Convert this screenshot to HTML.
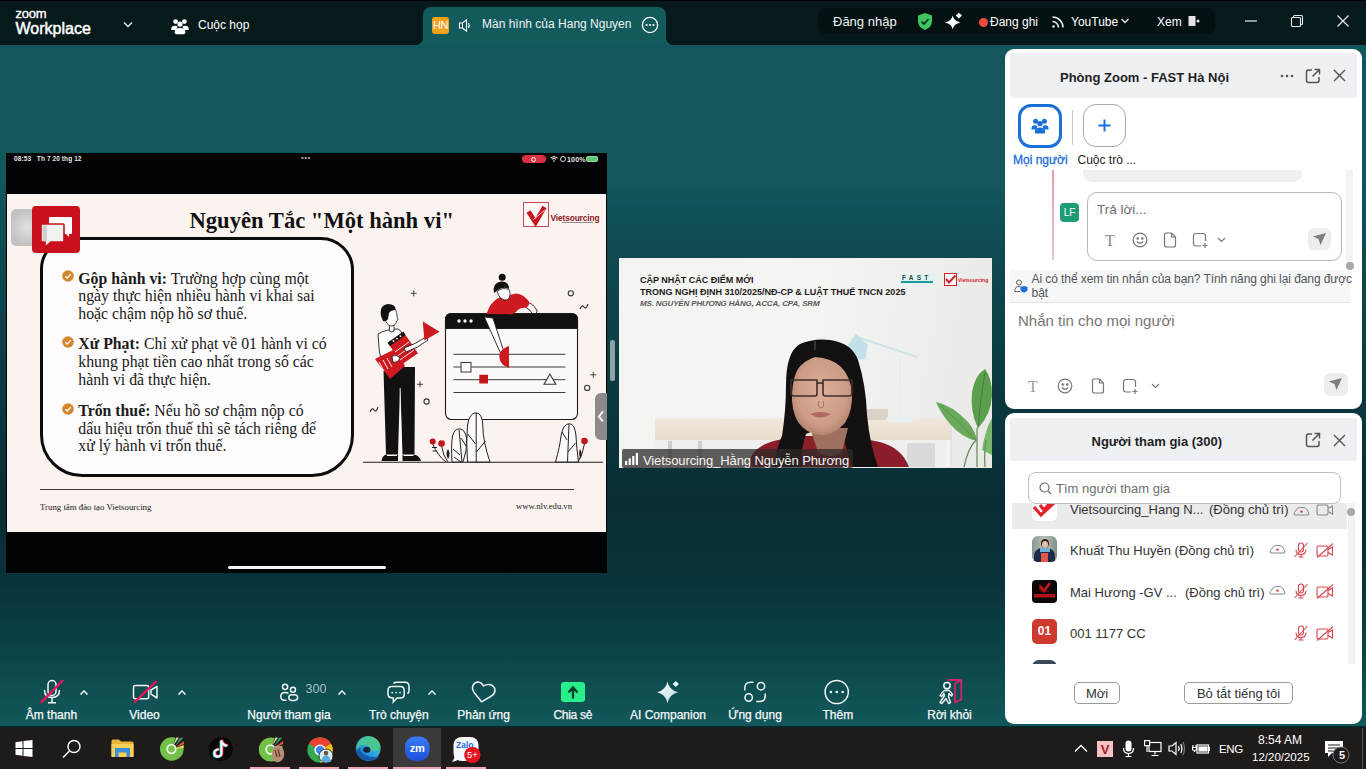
<!DOCTYPE html>
<html><head><meta charset="utf-8">
<style>
*{margin:0;padding:0;box-sizing:border-box}
html,body{width:1366px;height:769px;overflow:hidden;font-family:"Liberation Sans",sans-serif}
body{position:relative;background:linear-gradient(to bottom,#12575b 0px,#12575b 185px,#105259 205px,#0f4950 258px,#0b3a41 380px,#082d34 500px,#09333a 585px,#0c4649 660px,#12575a 722px,#12575a 728px)}
.a{position:absolute}
.t{position:absolute;line-height:1;white-space:nowrap}
#top{left:0;top:0;width:1366px;height:45px;background:#061a1c;border-top:1px solid #000}
#tab{left:423px;top:7px;width:243px;height:38px;background:#135a5d;border-radius:8px 8px 0 0}
#pill{left:818px;top:8px;width:397px;height:26px;background:#031113;border-radius:8px}
.w{color:#fff}
</style></head><body>
<!-- TOP BAR -->
<div id="top" class="a">
  <div class="t w" style="left:15.5px;top:5.5px;font-size:13px;letter-spacing:-0.2px;-webkit-text-stroke:0.35px #fff">zoom</div>
  <div class="t w" style="left:15.5px;top:19.5px;font-size:16px;-webkit-text-stroke:0.45px #fff">Workplace</div>
  <svg class="a" style="left:122px;top:19px" width="12" height="9" viewBox="0 0 12 9"><path d="M2 2.5 L6 6.5 L10 2.5" stroke="#dfe6e6" stroke-width="1.4" fill="none"/></svg>
  <svg class="a" style="left:171px;top:16.5px" width="18" height="17" viewBox="0 0 18 16" fill="#fff"><circle cx="4.6" cy="3.1" r="2.4"/><circle cx="13.4" cy="3.1" r="2.4"/><circle cx="9" cy="5.6" r="2.6"/><path d="M0.3 10.5 Q0.3 7.2 4 7.2 Q6 7.2 6.6 8.3 L5 11.6 H0.3Z"/><path d="M17.7 10.5 Q17.7 7.2 14 7.2 Q12 7.2 11.4 8.3 L13 11.6 H17.7Z"/><path d="M3.6 14 Q3.6 9.4 9 9.4 Q14.4 9.4 14.4 14 Q14.4 15.8 12.5 15.8 H5.5 Q3.6 15.8 3.6 14Z"/></svg>
  <div class="t w" style="left:198px;top:18px;font-size:12px">Cuộc họp</div>
</div>
<div id="tab" class="a">
  <div class="a" style="left:-8px;top:30px;width:8px;height:8px;background:radial-gradient(circle at 0 0,#061a1c 8px,#135a5d 8.5px)"></div>
  <div class="a" style="right:-8px;top:30px;width:8px;height:8px;background:radial-gradient(circle at 100% 0,#061a1c 8px,#135a5d 8.5px)"></div>
  <div class="a" style="left:9px;top:10px;width:17px;height:17px;background:#f0a21f;border-radius:3px"></div>
  <div class="t" style="left:9px;top:13px;width:17px;text-align:center;font-size:11px;color:#fff;letter-spacing:-0.5px">HN</div>
  <svg class="a" style="left:35px;top:11px" width="15" height="15" viewBox="0 0 15 15"><path d="M1.5 5 H4.5 L8.5 1.8 V13.2 L4.5 10 H1.5Z" stroke="#fff" stroke-width="1.1" fill="none"/><path d="M4.5 5 V10" stroke="#fff" stroke-width="1"/><path d="M10.5 5 Q12 7.5 10.5 10" stroke="#fff" stroke-width="1.1" fill="none"/></svg>
  <div class="t w" style="left:59px;top:11px;font-size:12px;color:#eef4f4">Màn hình của Hang Nguyen</div>
  <svg class="a" style="left:218px;top:9px" width="18" height="18" viewBox="0 0 18 18"><circle cx="9" cy="9" r="7.6" stroke="#fff" stroke-width="1.3" fill="none"/><circle cx="5.6" cy="9" r="1.1" fill="#fff"/><circle cx="9" cy="9" r="1.1" fill="#fff"/><circle cx="12.4" cy="9" r="1.1" fill="#fff"/></svg>
</div>
<div id="pill" class="a">
  <div class="t w" style="left:15px;top:7px;font-size:13px;color:#f2f2f2">Đăng nhập</div>
  <svg class="a" style="left:98px;top:4px" width="18" height="19" viewBox="0 0 18 19"><path d="M9 1 L16 3.6 V9 C16 13.5 12.8 16.5 9 18 C5.2 16.5 2 13.5 2 9 V3.6Z" fill="#3ec55f"/><path d="M5.5 9.5 L8 12 L12.5 7" stroke="#0e2a17" stroke-width="1.7" fill="none"/></svg>
  <svg class="a" style="left:125px;top:3px" width="20" height="20" viewBox="943 11 20 20" fill="#fff"><path d="M952.7 15.6 Q953.8 21.2 960.4 22.5 Q953.8 23.8 952.7 29.3 Q951.6 23.8 945 22.5 Q951.6 21.2 952.7 15.6Z"/><path d="M958.8 12.8 L962 15.6 L958.8 18.4 L955.8 15.6Z"/></svg>
  <div class="a" style="left:161px;top:10px;width:9px;height:9px;border-radius:50%;background:#ee4b3e"></div>
  <div class="t w" style="left:172px;top:8px;font-size:12px">Đang ghi</div>
  <svg class="a" style="left:233px;top:6px" width="15" height="15" viewBox="0 0 15 15" fill="none" stroke="#e8e8e8" stroke-width="1.6"><circle cx="2.5" cy="12.5" r="1.3" fill="#e8e8e8" stroke="none"/><path d="M1.5 7.5 A6 6 0 0 1 7.5 13.5"/><path d="M1.5 3 A10.5 10.5 0 0 1 12 13.5"/></svg>
  <div class="t w" style="left:253px;top:8px;font-size:12px">YouTube</div>
  <svg class="a" style="left:302px;top:9px" width="10" height="8" viewBox="0 0 10 8"><path d="M1.5 2 L5 5.5 L8.5 2" stroke="#e8e8e8" stroke-width="1.3" fill="none"/></svg>
  <div class="t w" style="left:339px;top:8px;font-size:12px">Xem</div>
  <svg class="a" style="left:369px;top:7px" width="14" height="13" viewBox="0 0 14 13"><rect x="1.5" y="1" width="7" height="10" fill="#e6e6e6"/><circle cx="11" cy="6" r="1.5" fill="#e6e6e6"/></svg>
</div>
<svg class="a" style="left:1244px;top:14px" width="14" height="14" viewBox="0 0 14 14"><path d="M1 7 H13" stroke="#e8e8e8" stroke-width="1.2"/></svg>
<svg class="a" style="left:1290px;top:14px" width="14" height="14" viewBox="0 0 14 14" fill="none" stroke="#e8e8e8" stroke-width="1.1"><rect x="1.5" y="3.5" width="9" height="9" rx="1"/><path d="M3.5 3.5 V2.5 Q3.5 1.5 4.5 1.5 H11.5 Q12.5 1.5 12.5 2.5 V9.5 Q12.5 10.5 11.5 10.5 H10.5"/></svg>
<svg class="a" style="left:1336px;top:14px" width="14" height="14" viewBox="0 0 14 14"><path d="M1.5 1.5 L12.5 12.5 M12.5 1.5 L1.5 12.5" stroke="#e8e8e8" stroke-width="1.2"/></svg>


<!-- SHARE -->
<div class="a" style="left:6px;top:153px;width:601px;height:420px;background:#020103;overflow:hidden">
  <div class="t" style="left:8px;top:3px;font-size:6.5px;font-weight:bold;color:#e8e8e8;letter-spacing:0.1px">08:53&nbsp;&nbsp;&nbsp;Th 7 20 thg 12</div>
  <div class="t" style="left:295px;top:1px;font-size:8px;color:#aaa;letter-spacing:0.5px">•••</div>
  <div class="a" style="left:516px;top:2px;width:24px;height:8px;border-radius:4px;background:#d8323e"></div>
  <div class="a" style="left:525px;top:3.5px;width:5px;height:5px;border-radius:50%;border:1px solid #fff"></div>
  <svg class="a" style="left:544px;top:3px" width="8" height="6" viewBox="0 0 8 6"><path d="M0.5 2 Q4 -1 7.5 2 M1.8 3.3 Q4 1.5 6.2 3.3" stroke="#fff" stroke-width="1" fill="none"/><circle cx="4" cy="5" r="0.8" fill="#fff"/></svg>
  <div class="a" style="left:554px;top:3px;width:6px;height:6px;border-radius:50%;border:1px solid #ddd"></div>
  <div class="t" style="left:561px;top:2.5px;font-size:7px;font-weight:bold;color:#e8e8e8;letter-spacing:0.2px">100%</div>
  <div class="a" style="left:580px;top:3px;width:12px;height:6px;border-radius:1.5px;background:#5cc873;border:0.5px solid #9ad9a5"></div>
  <div class="a" style="left:1px;top:41px;width:599px;height:338px;background:#fbf3f0;overflow:hidden">
    <div class="t" style="left:182.5px;top:15.5px;font-family:'Liberation Serif',serif;font-weight:bold;font-size:22.6px;color:#111">Nguyên Tắc "Một hành vi"</div>
    <div class="a" style="left:516px;top:8px;width:25.5px;height:25px;border:1.4px solid #c44a55;background:#fdf7f6"></div>
    <svg class="a" style="left:516px;top:8px" width="26" height="25" viewBox="523 202 26 25"><path d="M528.5 211.5 L535.5 222.5 L544.5 207" stroke="#c8141e" stroke-width="4.6" fill="none" stroke-linejoin="miter"/><path d="M533.5 219.5 L544.8 210" stroke="#fdf7f6" stroke-width="0.9" fill="none"/></svg>
    <div class="t" style="left:543.5px;top:19.5px;font-size:8.3px;font-weight:bold;color:#8e1422;letter-spacing:-0.1px">Vietsourcing</div>
    <div class="a" style="left:555px;top:28px;width:31px;height:1.2px;background:#9a8a8a"></div>
    <div class="a" style="left:33px;top:42.5px;width:313.5px;height:240.5px;border:3px solid #0c0c0c;border-radius:32px 33px 42px 42px;background:#fefcfc"></div>
    <div class="a" style="left:4px;top:15px;width:27px;height:37px;border-radius:5px;background:radial-gradient(circle at 60% 50%,#e2e2e2,#c2c2c2 70%)"></div>
    <div class="a" style="left:25px;top:12px;width:48px;height:47px;border-radius:4px;background:#c8111c"></div>
    <svg class="a" style="left:25px;top:12px" width="48" height="47" viewBox="0 0 48 47">
      <path d="M17 12 Q17 11 18 11 H39 Q40 11 40 12 V27 Q40 28 39 28 H37 V31 L34 28 H27 V22 Q27 20 25 20 H17Z" fill="#fff"/>
      <path d="M9 19 Q9 18 10 18 H31 Q32 18 32 19 V35 Q32 36 31 36 H19 L13 41 V36 H10 Q9 36 9 35Z" fill="#f2f2f2" stroke="#c8111c" stroke-width="1.6"/>
      <path d="M10.5 19.5 H15 V35 H10.5Z" fill="#cfcfcf"/>
    </svg>
    <div class="t" style="left:71.3px;top:76.7px;font-family:'Liberation Serif',serif;font-size:15.8px;color:#1a1a1a"><b>Gộp hành vi:</b> Trường hợp cùng một</div>
<div class="t" style="left:71.3px;top:94.3px;font-family:'Liberation Serif',serif;font-size:15.8px;color:#1a1a1a">ngày thực hiện nhiều hành vi khai sai</div>
<div class="t" style="left:71.3px;top:111.9px;font-family:'Liberation Serif',serif;font-size:15.8px;color:#1a1a1a">hoặc chậm nộp hồ sơ thuế.</div>
<div class="t" style="left:71.3px;top:142.4px;font-family:'Liberation Serif',serif;font-size:15.8px;color:#1a1a1a"><b>Xử Phạt:</b> Chỉ xử phạt về 01 hành vi có</div>
<div class="t" style="left:71.3px;top:160.0px;font-family:'Liberation Serif',serif;font-size:15.8px;color:#1a1a1a">khung phạt tiền cao nhất trong số các</div>
<div class="t" style="left:71.3px;top:177.6px;font-family:'Liberation Serif',serif;font-size:15.8px;color:#1a1a1a">hành vi đã thực hiện.</div>
<div class="t" style="left:71.3px;top:208.9px;font-family:'Liberation Serif',serif;font-size:15.8px;color:#1a1a1a"><b>Trốn thuế:</b> Nếu hồ sơ chậm nộp có</div>
<div class="t" style="left:71.3px;top:226.5px;font-family:'Liberation Serif',serif;font-size:15.8px;color:#1a1a1a">dấu hiệu trốn thuế thì sẽ tách riêng để</div>
<div class="t" style="left:71.3px;top:244.1px;font-family:'Liberation Serif',serif;font-size:15.8px;color:#1a1a1a">xử lý hành vi trốn thuế.</div>
<svg class="a" style="left:54.5px;top:76px" width="12" height="12" viewBox="0 0 12 12"><circle cx="6" cy="6" r="5.8" fill="#d3872c"/><path d="M3.3 6.2 L5.2 8 L8.8 4.3" stroke="#fff" stroke-width="1.3" fill="none"/></svg><svg class="a" style="left:54.5px;top:142.3px" width="12" height="12" viewBox="0 0 12 12"><circle cx="6" cy="6" r="5.8" fill="#d3872c"/><path d="M3.3 6.2 L5.2 8 L8.8 4.3" stroke="#fff" stroke-width="1.3" fill="none"/></svg><svg class="a" style="left:54.5px;top:209.3px" width="12" height="12" viewBox="0 0 12 12"><circle cx="6" cy="6" r="5.8" fill="#d3872c"/><path d="M3.3 6.2 L5.2 8 L8.8 4.3" stroke="#fff" stroke-width="1.3" fill="none"/></svg>
    <div class="a" style="left:33px;top:294.5px;width:534px;height:1.5px;background:#3a3a3a"></div>
    <div class="t" style="left:33px;top:308.5px;font-family:'Liberation Serif',serif;font-size:8.8px;color:#222">Trung tâm đào tạo Vietsourcing</div>
    <div class="t" style="left:509px;top:307.5px;font-family:'Liberation Serif',serif;font-size:8.6px;color:#222">www.nlv.edu.vn</div>
<svg class="a" style="left:0;top:0" width="599" height="338" viewBox="7 194 599 338">
<g fill="none" stroke="#1c1c1c" stroke-width="1.1">
<path d="M363 462.3 H603"/>
<rect x="445.5" y="313.5" width="132" height="106" rx="6" fill="#fdf9f8"/>
<path d="M445.5 328.5 V319.5 Q445.5 313.5 451.5 313.5 H571.5 Q577.5 313.5 577.5 319.5 V328.5Z" fill="#111"/>
<path d="M453.5 354.3 H565.5 M453.5 367 H565.5 M453.5 379.7 H565.5 M453.5 392.5 H565.5" stroke="#3a3a3a" stroke-width="1"/>
<rect x="461" y="362.5" width="10" height="9.5" fill="#fff" stroke="#444"/>
<path d="M544 384.3 L549.9 374 L555.8 384.3Z" fill="#fff" stroke="#333"/>
<!-- sparkles -->
<path d="M413.7 290.3 V296.3 M410.7 293.3 H416.7 M420 381.3 V387.3 M417 384.3 H423 M593.3 371.8 V377.8 M590.3 374.8 H596.3" stroke="#333" stroke-width="0.9"/>
<circle cx="570.8" cy="293.3" r="2.6" stroke="#333"/><circle cx="426.6" cy="401.5" r="2.6" stroke="#333"/><circle cx="587.2" cy="387.9" r="2.6" stroke="#333"/>
<path d="M580 309 Q582 304 584 307 Q586 310 588 304" stroke="#333"/><path d="M370 412 Q372 407 374 410 Q376 413 378 407" stroke="#333"/>
<!-- plants -->
<path d="M467.5 462 Q466 442 467.5 425 Q469.5 412.8 476 412.8 Q482.5 413 482.8 426 Q483 442 490 462Z M476.2 413 V462 M467.8 434 L475.5 444 M476.5 452 L485.5 441" stroke="#222" stroke-width="1" fill="#fdf9f8"/>
<path d="M452 462 Q451 445 452.5 436 Q454.5 428.8 459.5 428.8 Q465 429 466.5 438 Q467.5 450 463 462Z M459 429.5 L462 462 M453 449 L460 455 M454 457 L461 462 M461 438 L466 446" stroke="#222" stroke-width="1" fill="#fdf9f8"/>
<path d="M555.5 462 Q560 446 561 436 Q563 423.7 569.5 423.7 Q575 424 576 436 Q576.5 448 578.5 462Z M569 424 L567.5 462 M562 432 L567 440 M568 452 L575.5 443" stroke="#222" stroke-width="1" fill="#fdf9f8"/>
<path d="M432.7 444 Q438 456 446 462 M441.6 446 Q443 456 448 462 M584.5 443.5 Q583 454 578 462 M432 447.5 H437 M432.5 451 H437" stroke="#222" stroke-width="1" fill="none"/>
</g>
<g fill="#fff"><circle cx="459" cy="321" r="1.7"/><circle cx="465" cy="321" r="1.7"/><circle cx="471" cy="321" r="1.7"/></g>
<rect x="479.3" y="374.8" width="8.7" height="8.7" fill="#c4141c"/>
<g fill="#c4141c"><circle cx="432.7" cy="441.6" r="3"/><circle cx="441.6" cy="443.6" r="3.3"/><circle cx="584.5" cy="441" r="3.3"/></g>
<path d="M448 459 Q445 453 448 449 Q451 454 448 459Z M580.5 459 Q578 453 580 449 Q583 454 580.5 459Z" fill="#222"/>
<!-- woman -->
<path d="M486.5 314 Q490 302 499.3 297.5 L515.8 293.6 Q524 294 530 303 L526.5 308 Q520 307 516 312 L512 314.4Z" fill="#cc1a20"/>
<path d="M530 303 Q535 306 537.2 310.8 L536 313.5 M526.5 308 Q531 310 532 313.5" fill="none" stroke="#1c1c1c" stroke-width="0.9"/>
<path d="M484.3 317 L500.8 353.7 Q503 354 503.5 350.5 L492.9 318Z" fill="#fff" stroke="#1c1c1c" stroke-width="0.9"/>
<circle cx="502.2" cy="277.2" r="3.5" fill="#111"/>
<path d="M494 293 Q492 283 501 281.5 Q509 281 509 289 Q504 286 498 290Z" fill="#111"/>
<path d="M497 291.5 Q502 287 509 289.5 Q512 296 507 300 Q500 301 497 291.5Z" fill="#fff" stroke="#1c1c1c" stroke-width="0.8"/>
<path d="M509 345.8 Q499 350 499.3 357 Q500 365 509 368Z" fill="#cc1a20"/>
<!-- man -->
<path d="M383.4 367 H415 L414.5 454 H402.5 L400 386 L398 454 H386Z" fill="#111"/>
<path d="M400.2 388 L401.5 452" stroke="#fff" stroke-width="0.8"/>
<path d="M386 454.5 H398 V461 H381.5 Q382 456 386 454.5Z M402.5 454.5 H414.5 Q420 456 421 461 H402.5Z" fill="#111"/>
<path d="M387 455.5 H397 M403.5 455.5 H413.5" stroke="#fff" stroke-width="1.2"/>
<path d="M378 334 Q386 329 398 329 Q403 331 403 340 L402 368 H383 Q378 350 378 334Z" fill="#fff" stroke="#1c1c1c" stroke-width="0.9"/>
<path d="M389.5 324 V331 Q392 333 394 331 V325" fill="#fff" stroke="#1c1c1c" stroke-width="0.8"/>
<path d="M385 311 Q386 306 392 307 Q397 309 397 316 L398 320 L396.5 321 Q396 326 391 326 Q386 325 385 318Z" fill="#fff" stroke="#1c1c1c" stroke-width="0.8"/>
<path d="M381 316 Q379 305 388 304 Q396 304 395.5 310 Q391 310 389 313 L388 319 Q386 322 383 321Z" fill="#111"/>
<path d="M375 359 L395 349 L405 366 L390 379Z" fill="#cc1a20"/>
<path d="M379 362 L384 371 M383 360 L388 369 M387 358 L392 367" stroke="#fff" stroke-width="0.9"/>
<path d="M387.6 342.7 L403.3 331.7 L418 353.2 L402.5 364Z" fill="#cc1a20"/>
<path d="M387.6 342.7 L403.3 331.7 L405.5 335 L390 346Z" fill="#111"/>
<circle cx="393.5" cy="341" r="0.9" fill="#fff"/><circle cx="397" cy="338.6" r="0.9" fill="#fff"/><circle cx="400.5" cy="336.2" r="0.9" fill="#fff"/>
<path d="M395 352 L409 342 M397.5 356 L411.5 346 M400 360 L414 350" stroke="#fff" stroke-width="0.9"/>
<path d="M404 348 Q416 344 426 337 L428 340 Q418 348 406 352Z" fill="#fff" stroke="#1c1c1c" stroke-width="0.9"/>
<path d="M392 356 Q397 354 400 358 Q398 363 393 362Z" fill="#fff" stroke="#1c1c1c" stroke-width="0.8"/>
<path d="M422.8 321.6 L439.6 331.7 L424.4 340.4Z" fill="#cc1a20"/>
</svg>
  </div>
  <div class="a" style="left:222px;top:413px;width:158px;height:3px;border-radius:2px;background:#f4f4f4"></div>
  <div class="a" style="left:589px;top:240px;width:14px;height:47px;border-radius:6px 0 0 6px;background:#8b8b8b"></div>
  <svg class="a" style="left:591px;top:257px" width="8" height="13" viewBox="0 0 8 13"><path d="M6 1.5 L2 6.5 L6 11.5" stroke="#fff" stroke-width="2" fill="none"/></svg>
</div>
<div class="a" style="left:610px;top:340px;width:5px;height:41px;border-radius:2px;background:#8ea3a4"></div>
<!-- VIDEO -->
<div class="a" style="left:619px;top:258px;width:373px;height:210px;overflow:hidden;background:linear-gradient(100deg,#f3f3f1 0%,#f5f5f3 40%,#f0f0ee 70%,#e8e9e7 100%)">
<svg class="a" style="left:0;top:0" width="373" height="210" viewBox="619 258 373 210">
<defs>
<radialGradient id="face" cx="0.5" cy="0.45" r="0.6"><stop offset="0" stop-color="#dcae98"/><stop offset="0.7" stop-color="#cc9c86"/><stop offset="1" stop-color="#ad7d6a"/></radialGradient>
<linearGradient id="desk" x1="0" y1="0" x2="0" y2="1"><stop offset="0" stop-color="#f0e8dc"/><stop offset="1" stop-color="#e9dccb"/></linearGradient>
</defs>
<!-- desk -->
<path d="M655 418.5 H951 V440 H655Z" fill="url(#desk)"/>
<path d="M655 440 H951 V467 H655Z" fill="#efefed"/><path d="M670 441 V467 M700 441 V467" stroke="#cfcfcd" stroke-width="4"/>
<path d="M880 441 V467 M948 441 V467" stroke="#f4f4f2" stroke-width="4"/>
<path d="M907 443 H935 V467 H907Z" fill="#d9dadb"/><path d="M951 418 V467" stroke="#dcdcda" stroke-width="1"/>
<!-- books -->
<path d="M866 409 H888 V420 H866Z" fill="#d9d2c6"/>
<!-- lamp -->
<path d="M857 337 L917 357" stroke="#cfe4ea" stroke-width="2"/>
<path d="M900 356 V418" stroke="#e4eef0" stroke-width="2"/>
<ellipse cx="900" cy="419" rx="14" ry="4" fill="#e6eef0"/>
<path d="M848 345 L856 334 L868 345 L865 359 Q855 360 847 356Z" fill="#c3dfe7"/>
<!-- plant -->
<path d="M936 402 Q952 405 968 422 Q976 432 977 441 Q962 438 950 424 Q940 412 936 402Z" fill="#6aa85c"/>
<path d="M940 405 Q958 420 976 440" stroke="#4e8a44" stroke-width="0.8" fill="none"/>
<path d="M978 428 Q970 412 972 392 Q975 375 985 369 Q992 378 992 395 Q991 415 978 428Z" fill="#5b9e4d"/>
<path d="M985 372 Q980 400 978 428" stroke="#3f7a38" stroke-width="0.8" fill="none"/>
<path d="M982 450 Q985 430 992 418 V455Z" fill="#79b86a"/>
<path d="M977 467 V428 M964 467 Q968 448 976 440 M985 467 Q984 452 986 440" stroke="#6b8f5c" stroke-width="1.3" fill="none"/>
<!-- woman -->
<path d="M748 467 Q750 446 778 440 L800 436 H850 L880 442 Q902 448 909 467Z" fill="#8b1e29"/>
<path d="M774 467 Q776 448 782 436 Q786 410 786 385 Q786 352 800 344 Q814 338 830 340 Q852 343 858 360 Q866 385 867 415 Q870 445 878 467 H852 Q846 448 842 432 L820 428 L806 434 Q800 452 802 467Z" fill="#121010"/>
<path d="M810 428 H848 L842 452 Q830 460 818 452Z" fill="#a0705f"/>
<path d="M792 392 Q791 365 815 357 Q848 359 852 392 Q853 410 845 423 Q833 436 821 435 Q806 434 798 422 Q791 410 792 392Z" fill="url(#face)"/>
<path d="M815 341 Q798 345 790 360 Q786 372 788 394 L792 394 Q793 374 801 364 Q808 358 815.5 356.5Z" fill="#121010"/>
<path d="M815 341 Q840 341 852 358 Q858 370 857 394 L852 394 Q851 374 844 364 Q834 357 815 356.5Z" fill="#121010"/>
<path d="M815 341 V350" stroke="#5a5450" stroke-width="1"/>
<g fill="none" stroke="#3d2f2b" stroke-width="1.6"><path d="M791 380 H817 V394 Q817 396 815 396 H794 Q791 396 791 393Z"/><path d="M823 380 H852 V392 Q852 396 849 396 H825 Q823 396 823 393Z"/><path d="M817 383 H823"/></g>
<path d="M819 401 Q817 407 821 408 Q825 407 823 401" fill="none" stroke="#a8705f" stroke-width="1"/>
<path d="M810 414 Q820 410 831 414 Q820 421 810 414Z" fill="#b06a62"/>
</svg>
<!-- title text -->
<div class="t" style="left:21px;top:18px;font-size:9px;font-weight:bold;color:#1c1c1c">CẬP NHẬT CÁC ĐIỂM MỚI</div>
<div class="t" style="left:21px;top:30px;font-size:9px;font-weight:bold;color:#1c1c1c">TRONG NGHỊ ĐỊNH 310/2025/NĐ-CP &amp; LUẬT THUẾ TNCN 2025</div>
<div class="t" style="left:21px;top:42px;font-size:8px;font-style:italic;font-weight:bold;color:#5a5a5a;letter-spacing:-0.15px">MS. NGUYỄN PHƯƠNG HẰNG, ACCA, CPA, SRM</div>
<div class="a" style="left:281px;top:16px;width:35px;height:10px;background:#dff3f3"></div><div class="t" style="left:283px;top:16.5px;font-size:6.5px;font-weight:bold;color:#2e4a4e;letter-spacing:3.2px">FAST</div>
<div class="a" style="left:282px;top:23px;width:32px;height:2.3px;background:#1f9a98"></div>
<div class="a" style="left:325px;top:15px;width:13px;height:13px;border:1px solid #d3202c;background:#fff"></div>
<svg class="a" style="left:325px;top:15px" width="13" height="13" viewBox="0 0 13 13"><path d="M2 6 L5 9.5 L11.5 2.5" stroke="#d3202c" stroke-width="2" fill="none"/></svg>
<div class="t" style="left:339px;top:20px;font-size:5px;font-weight:bold;color:#d3202c">Vietsourcing</div>
<!-- name label -->
<div class="a" style="left:3px;top:191px;width:231px;height:19px;background:rgba(45,42,42,0.75);border-radius:2px"></div>
<svg class="a" style="left:6px;top:195px" width="14" height="12" viewBox="0 0 14 12" fill="#fff"><rect x="0" y="8" width="2.2" height="4"/><rect x="3.6" y="5.5" width="2.2" height="6.5"/><rect x="7.2" y="3" width="2.2" height="9"/><rect x="10.8" y="0" width="2.2" height="12"/></svg>
<div class="t" style="left:24px;top:195.5px;font-size:13px;color:#f4f4f4;letter-spacing:-0.1px">Vietsourcing_Hằng Nguyễn Phương</div>
</div>
<!-- CHAT PANEL -->
<div class="a" style="left:1005px;top:49px;width:357px;height:360px;background:#fff;border-radius:9px;overflow:hidden">
  <div class="a" style="left:5px;top:4px;width:347px;height:45px;background:#eef0f4;border-radius:3px"></div>
  <div class="t" style="left:55px;top:22px;font-size:13px;font-weight:bold;color:#1e1f22">Phòng Zoom - FAST Hà Nội</div>
  <svg class="a" style="left:275px;top:24px" width="14" height="6" viewBox="0 0 14 6" fill="#555"><circle cx="2" cy="3" r="1.3"/><circle cx="7" cy="3" r="1.3"/><circle cx="12" cy="3" r="1.3"/></svg>
  <svg class="a" style="left:300px;top:19px" width="16" height="16" viewBox="0 0 16 16" fill="none" stroke="#555" stroke-width="1.5"><path d="M7 2 H3.5 Q1.5 2 1.5 4 V12.5 Q1.5 14.5 3.5 14.5 H12 Q14 14.5 14 12.5 V9"/><path d="M9.5 1.5 H14.5 V6.5 M14.5 1.5 L7.5 8.5"/></svg>
  <svg class="a" style="left:328px;top:20px" width="13" height="13" viewBox="0 0 13 13"><path d="M1 1 L12 12 M12 1 L1 12" stroke="#555" stroke-width="1.4"/></svg>
  <div class="a" style="left:13px;top:55px;width:44px;height:44px;border:3px solid #1b6fd8;border-radius:13px"></div>
  <svg class="a" style="left:26px;top:69px" width="18" height="16" viewBox="0 0 18 16" fill="#1b6fd8"><circle cx="4.6" cy="3.3" r="2.5"/><circle cx="13.4" cy="3.3" r="2.5"/><circle cx="9" cy="5.6" r="2.7"/><path d="M0.5 10.5 Q0.5 7.3 4 7.3 Q6 7.3 6.5 8.5 L5 11.5 H0.5Z"/><path d="M17.5 10.5 Q17.5 7.3 14 7.3 Q12 7.3 11.5 8.5 L13 11.5 H17.5Z"/><path d="M3.8 14 Q3.8 9.5 9 9.5 Q14.2 9.5 14.2 14 Q14.2 15.5 12.5 15.5 H5.5 Q3.8 15.5 3.8 14Z"/></svg>
  <div class="a" style="left:67px;top:61px;width:1px;height:35px;background:#c9c9c9"></div>
  <div class="a" style="left:78px;top:55px;width:43px;height:43px;border:1px solid #a9a9a9;border-radius:13px"></div>
  <svg class="a" style="left:93px;top:70px" width="13" height="13" viewBox="0 0 13 13"><path d="M6.5 0.5 V12.5 M0.5 6.5 H12.5" stroke="#1b6fd8" stroke-width="2"/></svg>
  <div class="t" style="left:8px;top:104.5px;font-size:12px;color:#1b6fd8;-webkit-text-stroke:0.3px #1b6fd8">Mọi người</div>
  <div class="t" style="left:72.5px;top:104.5px;font-size:12px;color:#232323">Cuộc trò ...</div>
  <div class="a" style="left:78px;top:121px;width:219px;height:12px;background:#eef0f4;border-radius:0 0 9px 9px"></div>
  <div class="a" style="left:47px;top:121px;width:1.5px;height:90px;background:linear-gradient(#e79aa4,#e8c7cb)"></div>
  <div class="a" style="left:341px;top:121px;width:7px;height:99px;background:#f3f3f3"></div>
  <div class="a" style="left:341px;top:213px;width:8px;height:8px;border-radius:50%;background:#a8a8a8"></div>
  <div class="a" style="left:55px;top:154px;width:19px;height:19px;border-radius:4px;background:#1e9c78"></div>
  <div class="t" style="left:55px;top:158.5px;width:19px;text-align:center;font-size:10px;color:#fff">LF</div>
  <div class="a" style="left:82px;top:143px;width:255px;height:69px;border:1px solid #b8b8b8;border-radius:10px"></div>
  <div class="t" style="left:92px;top:154px;font-size:13.5px;color:#6e6e6e">Trả lời...</div>
  <div class="ic1" style="position:absolute;left:97px;top:182px;width:250px;height:20px">
    <div class="t" style="left:3px;top:2px;font-size:16px;font-family:'Liberation Serif',serif;color:#8a8a8a">T</div>
    <svg class="a" style="left:30px;top:1px" width="16" height="16" viewBox="0 0 16 16" fill="none" stroke="#777" stroke-width="1.2"><circle cx="8" cy="8" r="6.8"/><circle cx="5.7" cy="6.5" r="0.7" fill="#777"/><circle cx="10.3" cy="6.5" r="0.7" fill="#777"/><path d="M4.8 9.5 Q8 12.8 11.2 9.5"/></svg>
    <svg class="a" style="left:61px;top:1px" width="14" height="16" viewBox="0 0 14 16" fill="none" stroke="#777" stroke-width="1.2"><path d="M2.5 1 H8.5 L12.5 5 V13 Q12.5 15 10.5 15 H3.5 Q1.5 15 1.5 13 V3 Q1.5 1 3.5 1Z M8.5 1 V5 H12.5"/></svg>
    <svg class="a" style="left:90px;top:1px" width="17" height="17" viewBox="0 0 17 17" fill="none" stroke="#777" stroke-width="1.2"><path d="M9 14 H4 Q1.5 14 1.5 11.5 V4 Q1.5 1.5 4 1.5 H11 Q13.5 1.5 13.5 4 V9"/><path d="M13 11 V16 M10.5 13.5 H15.5"/></svg>
    <svg class="a" style="left:115px;top:6px" width="9" height="6" viewBox="0 0 9 6"><path d="M1 1 L4.5 4.5 L8 1" stroke="#777" stroke-width="1.2" fill="none"/></svg>
  </div>
  <div class="a" style="left:303px;top:179px;width:23px;height:22px;border-radius:6px;background:#ededed"></div>
  <svg class="a" style="left:307px;top:183px" width="15" height="14" viewBox="0 0 15 14"><path d="M0.8 4.5 L14 1 L8.5 13 L6.5 7Z" fill="#7e7e7e"/></svg>
  <div class="a" style="left:5px;top:221px;width:340px;height:33px;background:#f6f7f9;border-bottom:1px solid #e3e3e6"></div>
  <svg class="a" style="left:9px;top:230px" width="14" height="14" viewBox="0 0 14 14" fill="none" stroke="#666" stroke-width="1"><circle cx="5" cy="3.5" r="2.5"/><path d="M0.7 12.5 Q0.7 7.5 5 7.5 Q6.5 7.5 7.5 8.3 M0.7 12.5 H6"/><path d="M10 7 L13.5 8 V10.5 Q13.5 12.5 10 13.8 Q6.5 12.5 6.5 10.5 V8Z" fill="#1b6fd8" stroke="none"/></svg>
  <div class="t" style="left:26.5px;top:224px;font-size:12px;color:#545454;letter-spacing:-0.08px">Ai có thể xem tin nhắn của bạn? Tính năng ghi lại đang được</div>
  <div class="t" style="left:26.5px;top:237.5px;font-size:12px;color:#545454">bật</div>
  <div class="t" style="left:13px;top:263.5px;font-size:15px;color:#767676">Nhắn tin cho mọi người</div>
  <div class="ic2" style="position:absolute;left:19px;top:328px;width:250px;height:20px">
    <div class="t" style="left:4px;top:2px;font-size:16px;font-family:'Liberation Serif',serif;color:#9a9a9a">T</div>
    <svg class="a" style="left:33px;top:1px" width="16" height="16" viewBox="0 0 16 16" fill="none" stroke="#777" stroke-width="1.2"><circle cx="8" cy="8" r="6.8"/><circle cx="5.7" cy="6.5" r="0.7" fill="#777"/><circle cx="10.3" cy="6.5" r="0.7" fill="#777"/><path d="M4.8 9.5 Q8 12.8 11.2 9.5"/></svg>
    <svg class="a" style="left:67px;top:1px" width="14" height="16" viewBox="0 0 14 16" fill="none" stroke="#777" stroke-width="1.2"><path d="M2.5 1 H8.5 L12.5 5 V13 Q12.5 15 10.5 15 H3.5 Q1.5 15 1.5 13 V3 Q1.5 1 3.5 1Z M8.5 1 V5 H12.5"/></svg>
    <svg class="a" style="left:98px;top:1px" width="17" height="17" viewBox="0 0 17 17" fill="none" stroke="#777" stroke-width="1.2"><path d="M9 14 H4 Q1.5 14 1.5 11.5 V4 Q1.5 1.5 4 1.5 H11 Q13.5 1.5 13.5 4 V9"/><path d="M13 11 V16 M10.5 13.5 H15.5"/></svg>
    <svg class="a" style="left:127px;top:6px" width="9" height="6" viewBox="0 0 9 6"><path d="M1 1 L4.5 4.5 L8 1" stroke="#777" stroke-width="1.2" fill="none"/></svg>
  </div>
  <div class="a" style="left:319px;top:324px;width:24px;height:23px;border-radius:6px;background:#ededed"></div>
  <svg class="a" style="left:323px;top:328px" width="15" height="14" viewBox="0 0 15 14"><path d="M0.8 4.5 L14 1 L8.5 13 L6.5 7Z" fill="#7e7e7e"/></svg>
</div>
<!-- PARTICIPANTS PANEL -->
<div class="a" style="left:1005px;top:413px;width:357px;height:311px;background:#fff;border-radius:9px;overflow:hidden">
  <div class="a" style="left:5px;top:5px;width:347px;height:43px;background:#eef0f4;border-radius:3px"></div>
  <div class="t" style="left:86.5px;top:21.5px;font-size:13px;font-weight:bold;color:#1e1f22">Người tham gia (300)</div>
  <svg class="a" style="left:300px;top:19px" width="16" height="16" viewBox="0 0 16 16" fill="none" stroke="#555" stroke-width="1.5"><path d="M7 2 H3.5 Q1.5 2 1.5 4 V12.5 Q1.5 14.5 3.5 14.5 H12 Q14 14.5 14 12.5 V9"/><path d="M9.5 1.5 H14.5 V6.5 M14.5 1.5 L7.5 8.5"/></svg>
  <svg class="a" style="left:328px;top:20.5px" width="13" height="13" viewBox="0 0 13 13"><path d="M1 1 L12 12 M12 1 L1 12" stroke="#555" stroke-width="1.4"/></svg>
  <!-- list -->
  <div class="a" style="left:0;top:90px;width:357px;height:161px;overflow:hidden">
    <div class="a" style="left:7px;top:-3px;width:335px;height:29px;background:#ebebeb"></div>
    <div class="a" style="left:343px;top:0;width:7px;height:161px;background:#f3f3f3"></div>
    <div class="a" style="left:342px;top:5px;width:8px;height:8px;border-radius:50%;background:#a8a8a8"></div>
    <!-- row1 -->
    <div class="a" style="left:27px;top:-10px;width:25px;height:28px;background:#fff;border-radius:5px;overflow:hidden"><svg width="25" height="28" viewBox="0 0 25 28"><path d="M2 14 L9 22 L24 8" stroke="#e3222f" stroke-width="3.2" fill="none"/><path d="M8 12 L12 17 L23 4" stroke="#e3222f" stroke-width="3.2" fill="none"/></svg></div>
    <div class="t" style="left:65px;top:0px;font-size:13px;color:#333">Vietsourcing_Hang N...</div>
    <div class="t" style="left:204px;top:0px;font-size:13px;color:#333">(Đồng chủ trì)</div>
    <svg class="a" style="left:288px;top:2.5px" width="17" height="10" viewBox="0 0 17 10" fill="none" stroke="#888" stroke-width="1"><path d="M1.5 9 Q0.5 8.5 1.5 6.5 L4 3 Q5 1.5 7.5 1.5 H11 Q12.5 1.5 13.5 3 L15.8 7 Q16.5 9 15 9Z"/><circle cx="8.5" cy="5.6" r="1.2" fill="#d33" stroke="none"/></svg>
    <svg class="a" style="left:311px;top:-1px" width="18" height="15" viewBox="0 0 18 15" fill="none" stroke="#888" stroke-width="1.1"><rect x="1" y="3" width="11" height="10" rx="1.5"/><path d="M12 6.5 L16.5 4 V12 L12 9.5"/></svg>
    <!-- row2 -->
    <div class="a" style="left:27px;top:33px;width:25px;height:26px;border-radius:6px;overflow:hidden;background:linear-gradient(90deg,#8a9890,#b7c0b8 50%,#7d8f86)">
      <div class="a" style="left:9px;top:3px;width:8px;height:9px;border-radius:50%;background:#2a1f1a"></div>
      <div class="a" style="left:10px;top:5px;width:6px;height:7px;border-radius:50%;background:#e7c2a8"></div>
      <div class="a" style="left:2px;top:12px;width:21px;height:15px;border-radius:8px 8px 0 0;background:#1d2a48"></div>
      <div class="a" style="left:8px;top:12px;width:10px;height:4px;background:#6fb2d8"></div>
      <div class="a" style="left:9px;top:17px;width:7px;height:9px;background:#e0584a"></div>
    </div>
    <div class="t" style="left:65px;top:41px;font-size:13px;color:#333">Khuất Thu Huyền (Đồng chủ trì)</div>
    <!-- row3 -->
    <div class="a" style="left:27px;top:77px;width:25px;height:23px;border-radius:4px;overflow:hidden;background:#0c0707"><svg class="a" style="left:0;top:0" width="25" height="23" viewBox="0 0 25 23"><path d="M8 6 L12 11 L18 3" stroke="#d01a22" stroke-width="2.4" fill="none"/><path d="M8 4 V11 H17" stroke="#a01016" stroke-width="1" fill="none"/><rect x="2" y="14" width="21" height="3.5" fill="#b3141a"/></svg></div>
    <div class="t" style="left:65px;top:83px;font-size:13px;color:#333">Mai Hương -GV ...</div>
    <div class="t" style="left:180px;top:83px;font-size:13px;color:#333">(Đồng chủ trì)</div>
    <!-- row4 -->
    <div class="a" style="left:27px;top:116px;width:25px;height:25px;border-radius:5px;background:#cf3a2e"></div>
    <div class="t" style="left:27px;top:121.5px;width:25px;text-align:center;font-size:12px;font-weight:bold;color:#fff">01</div>
    <div class="t" style="left:65px;top:123.5px;font-size:13px;color:#333">001 1177 CC</div>
    <!-- row5 -->
    <div class="a" style="left:27px;top:157px;width:25px;height:25px;border-radius:7px;background:#3a4659"></div>
    <svg class="a" style="left:264px;top:41px" width="17" height="10" viewBox="0 0 17 10" fill="none" stroke="#888" stroke-width="1"><path d="M1.5 9 Q0.5 8.5 1.5 6.5 L4 3 Q5 1.5 7.5 1.5 H11 Q12.5 1.5 13.5 3 L15.8 7 Q16.5 9 15 9Z"/><circle cx="8.5" cy="5.6" r="1.2" fill="#d33" stroke="none"/></svg><svg class="a" style="left:288px;top:39px" width="16" height="16" viewBox="0 0 16 16" fill="none" stroke="#d9464e" stroke-width="1.1"><rect x="5.5" y="1" width="5" height="9" rx="2.5"/><path d="M3 7.5 Q3 12.5 8 12.5 Q13 12.5 13 7.5 M8 12.5 V15 M5.5 15 H10.5"/><path d="M1.5 15 L14.5 1"/></svg><svg class="a" style="left:311px;top:40px" width="18" height="15" viewBox="0 0 18 15" fill="none" stroke="#d9464e" stroke-width="1.1"><rect x="1" y="3" width="11" height="10" rx="1.5"/><path d="M12 6.5 L16.5 4 V12 L12 9.5"/><path d="M1 14.5 L17 0.5"/></svg><svg class="a" style="left:264px;top:82px" width="17" height="10" viewBox="0 0 17 10" fill="none" stroke="#888" stroke-width="1"><path d="M1.5 9 Q0.5 8.5 1.5 6.5 L4 3 Q5 1.5 7.5 1.5 H11 Q12.5 1.5 13.5 3 L15.8 7 Q16.5 9 15 9Z"/><circle cx="8.5" cy="5.6" r="1.2" fill="#d33" stroke="none"/></svg><svg class="a" style="left:288px;top:80px" width="16" height="16" viewBox="0 0 16 16" fill="none" stroke="#d9464e" stroke-width="1.1"><rect x="5.5" y="1" width="5" height="9" rx="2.5"/><path d="M3 7.5 Q3 12.5 8 12.5 Q13 12.5 13 7.5 M8 12.5 V15 M5.5 15 H10.5"/><path d="M1.5 15 L14.5 1"/></svg><svg class="a" style="left:311px;top:81px" width="18" height="15" viewBox="0 0 18 15" fill="none" stroke="#d9464e" stroke-width="1.1"><rect x="1" y="3" width="11" height="10" rx="1.5"/><path d="M12 6.5 L16.5 4 V12 L12 9.5"/><path d="M1 14.5 L17 0.5"/></svg><svg class="a" style="left:288px;top:122px" width="16" height="16" viewBox="0 0 16 16" fill="none" stroke="#d9464e" stroke-width="1.1"><rect x="5.5" y="1" width="5" height="9" rx="2.5"/><path d="M3 7.5 Q3 12.5 8 12.5 Q13 12.5 13 7.5 M8 12.5 V15 M5.5 15 H10.5"/><path d="M1.5 15 L14.5 1"/></svg><svg class="a" style="left:311px;top:123px" width="18" height="15" viewBox="0 0 18 15" fill="none" stroke="#d9464e" stroke-width="1.1"><rect x="1" y="3" width="11" height="10" rx="1.5"/><path d="M12 6.5 L16.5 4 V12 L12 9.5"/><path d="M1 14.5 L17 0.5"/></svg>
  </div>
  <div class="a" style="left:23px;top:59px;width:313px;height:32px;border:1px solid #bdbdbd;border-radius:8px;background:#fff"></div>
  <svg class="a" style="left:34px;top:69px" width="13" height="13" viewBox="0 0 13 13" fill="none" stroke="#666" stroke-width="1.2"><circle cx="5.5" cy="5.5" r="4.5"/><path d="M8.8 8.8 L12.2 12.2"/></svg>
  <div class="t" style="left:51px;top:68.5px;font-size:13px;color:#6e6e6e">Tìm người tham gia</div>
  <div class="a" style="left:69px;top:269px;width:46px;height:22px;border:1px solid #9a9a9a;border-radius:5px"></div>
  <div class="t" style="left:69px;top:274px;width:46px;text-align:center;font-size:13px;color:#333">Mời</div>
  <div class="a" style="left:179px;top:269px;width:109px;height:22px;border:1px solid #9a9a9a;border-radius:5px"></div>
  <div class="t" style="left:179px;top:274px;width:109px;text-align:center;font-size:13px;color:#333">Bỏ tắt tiếng tôi</div>
</div>
<!-- TOOLBAR -->
<div class="a" style="left:0;top:672px;width:1000px;height:56px">
<style>
.lb{position:absolute;top:37px;width:120px;text-align:center;font-size:12px;line-height:1;color:#f4f8f8;white-space:nowrap;-webkit-text-stroke:0.25px #f4f8f8}
.cr{position:absolute;top:17px}
</style>
<div class="lb" style="left:-8.6px">Âm thanh</div>
<div class="lb" style="left:84.5px">Video</div>
<div class="lb" style="left:229px">Người tham gia</div>
<div class="lb" style="left:338.9px">Trò chuyện</div>
<div class="lb" style="left:423.6px">Phản ứng</div>
<div class="lb" style="left:512.8px;letter-spacing:-0.3px">Chia sẻ</div>
<div class="lb" style="left:608px">AI Companion</div>
<div class="lb" style="left:695px">Ứng dụng</div>
<div class="lb" style="left:777.8px">Thêm</div>
<div class="lb" style="left:889.5px">Rời khỏi</div>
<svg class="cr" style="left:79px" width="10" height="7" viewBox="0 0 10 7"><path d="M1.5 5.5 L5 2 L8.5 5.5" stroke="#fff" stroke-width="1.4" fill="none"/></svg>
<svg class="cr" style="left:177px" width="10" height="7" viewBox="0 0 10 7"><path d="M1.5 5.5 L5 2 L8.5 5.5" stroke="#fff" stroke-width="1.4" fill="none"/></svg>
<svg class="cr" style="left:337px" width="10" height="7" viewBox="0 0 10 7"><path d="M1.5 5.5 L5 2 L8.5 5.5" stroke="#fff" stroke-width="1.4" fill="none"/></svg>
<svg class="cr" style="left:427px" width="10" height="7" viewBox="0 0 10 7"><path d="M1.5 5.5 L5 2 L8.5 5.5" stroke="#fff" stroke-width="1.4" fill="none"/></svg>
<!-- mic -->
<svg class="a" style="left:38px;top:6px" width="28" height="28" viewBox="38 678 28 28" fill="none" stroke="#f2f6f6" stroke-width="1.5">
<rect x="48" y="680.5" width="8" height="15" rx="4"/><path d="M44.5 690 Q44.5 697.5 52 697.5 Q59.5 697.5 59.5 690"/><path d="M52 697.5 V702.8 M48 702.8 H56"/>
<path d="M40.8 702.8 L63.2 680" stroke="#e5155c" stroke-width="2.4"/></svg>
<!-- video -->
<svg class="a" style="left:128px;top:6px" width="32" height="28" viewBox="128 678 32 28" fill="none" stroke="#f2f6f6" stroke-width="1.5">
<rect x="133.5" y="685.5" width="15.2" height="13.2" rx="2"/><path d="M151 690 L157 686.3 V698 L151 694.2Z" stroke-linejoin="round"/>
<path d="M134.3 702.3 L156.6 681" stroke="#e5155c" stroke-width="2.4"/></svg>
<!-- people -->
<svg class="a" style="left:278px;top:10px" width="22" height="22" viewBox="278 682 22 22" fill="none" stroke="#f2f6f6" stroke-width="1.5">
<circle cx="285.1" cy="686.8" r="2.6"/><circle cx="293" cy="689.8" r="2.5"/>
<path d="M288.5 693.3 Q287.5 692.5 285 692.5 Q280.8 692.5 280.8 696.5 Q280.8 700.2 284.5 700.2 H286.5"/>
<rect x="288.8" y="694.8" width="8.8" height="5.6" rx="2.8"/></svg>
<div class="t" style="left:305.5px;top:11px;font-size:12.5px;color:#a6c0c0">300</div>
<!-- chat -->
<svg class="a" style="left:384px;top:6px" width="30" height="30" viewBox="384 678 30 30" fill="none" stroke="#f2f6f6" stroke-width="1.5">
<path d="M393.5 683.5 Q394.5 682.3 397 682.3 H405 Q409 682.3 409 686.5 V690.5 Q409 692.5 407.5 693.8"/>
<path d="M388 690.5 Q388 686.5 392 686.5 H400.5 Q404.2 686.5 404.2 690.5 V694.2 Q404.2 698 400.5 698 H397 L393.3 702 V698 Q388 698 388 694.2Z"/>
<circle cx="392.2" cy="692.6" r="0.9" fill="#f2f6f6" stroke="none"/><circle cx="396.1" cy="692.6" r="0.9" fill="#f2f6f6" stroke="none"/><circle cx="400" cy="692.6" r="0.9" fill="#f2f6f6" stroke="none"/></svg>
<!-- heart -->
<svg class="a" style="left:468px;top:6px" width="32" height="30" viewBox="468 678 32 30" fill="none" stroke="#f2f6f6" stroke-width="1.5">
<path d="M481.5 701.8 L474.5 693 Q471.5 689 473 685.3 Q474.8 681.8 478.3 682 Q481.5 682.3 483.5 686 Q486.5 684 489.5 684.5 Q494.8 685.5 495 690.5 Q495 693.5 491.5 696Z" stroke-linejoin="round"/></svg>
<!-- share -->
<div class="a" style="left:561px;top:10px;width:24px;height:20px;background:#26ef8c;border-radius:3px"></div>
<svg class="a" style="left:561px;top:10px" width="24" height="20" viewBox="0 0 24 20"><path d="M12 16.5 V6.5 M7.5 10.5 L12 5.5 L16.5 10.5" stroke="#073a27" stroke-width="2.3" fill="none"/></svg>
<!-- AI -->
<svg class="a" style="left:654px;top:6px" width="28" height="30" viewBox="654 678 28 30">
<defs><linearGradient id="aig" x1="0" y1="0" x2="1" y2="1"><stop offset="0" stop-color="#f2fafb"/><stop offset="1" stop-color="#c4dde2"/></linearGradient></defs>
<path d="M667.5 681.5 Q669 690 678 692.3 Q669 694.5 667.5 703.2 Q666 694.5 657 692.3 Q666 690 667.5 681.5Z" fill="url(#aig)"/><path d="M675.8 681 L679 684 L675.8 687 L672.6 684Z" fill="#e2f2f4"/></svg>
<!-- apps -->
<svg class="a" style="left:740px;top:6px" width="30" height="30" viewBox="740 678 30 30" fill="none" stroke="#f2f6f6" stroke-width="1.5">
<path d="M744.8 690.5 V688 Q744.8 682.2 750.5 682.2 H753.5"/><circle cx="761" cy="686.2" r="3.7"/><circle cx="748.7" cy="697.5" r="3.7"/><path d="M765.2 693.5 V696 Q765.2 701.6 759.5 701.6 H756.3"/></svg>
<!-- more -->
<svg class="a" style="left:822px;top:6px" width="30" height="30" viewBox="822 678 30 30"><circle cx="836.7" cy="692" r="11.6" stroke="#f2f6f6" stroke-width="1.5" fill="none"/><circle cx="830.9" cy="692" r="1.3" fill="#f2f6f6"/><circle cx="836.8" cy="692" r="1.3" fill="#f2f6f6"/><circle cx="842.7" cy="692" r="1.3" fill="#f2f6f6"/></svg>
<!-- leave -->
<svg class="a" style="left:937px;top:6px" width="27" height="27" viewBox="937 678 27 27" fill="none">
<path d="M947.5 679.8 H961.3 V699.5 L955 702.5 V683.5 L961.3 679.8" stroke="#d8246a" stroke-width="1.7" stroke-linejoin="round"/>
<circle cx="947" cy="685.6" r="3.2" stroke="#f2f6f6" stroke-width="1.5"/>
<path d="M944.5 690.5 Q942 692 940 695.5 L941.5 696.5 L944 693.5 L944.3 696 L940 702.5 L942 703.5 L946 698.5 L948.5 703.5 L950.5 702.5 L948.5 696.5 L949 693.5 L951.5 696 L952.5 694.5 Q950 690.5 948 690.3 Z" stroke="#f2f6f6" stroke-width="1.4" stroke-linejoin="round"/>
</svg>
</div>
<!-- TASKBAR -->
<div class="a" style="left:0;top:725.5px;width:1366px;height:2.5px;background:#0e2528"></div>
<div class="a" style="left:0;top:728px;width:1366px;height:41px;background:#1f1b1b">
<svg class="a" style="left:15px;top:12px" width="18" height="17" viewBox="0 0 18 17" fill="#fff"><path d="M0.5 2.3 L7.5 1.3 V8 H0.5Z M8.5 1.1 L17.5 0 V8 H8.5Z M0.5 9 H7.5 V15.7 L0.5 14.7Z M8.5 9 H17.5 V17 L8.5 15.9Z"/></svg>
<svg class="a" style="left:62px;top:11px" width="20" height="19" viewBox="0 0 20 19" fill="none" stroke="#fff" stroke-width="1.4"><circle cx="12" cy="7.5" r="6"/><path d="M7.7 11.8 L1 18.5"/></svg>
<svg class="a" style="left:111px;top:11px" width="23" height="19" viewBox="0 0 23 19"><path d="M0.5 2 Q0.5 0.5 2 0.5 H8 L10 2.5 H21 Q22.5 2.5 22.5 4 V17.5 H0.5Z" fill="#e8b43c"/><rect x="0.5" y="5" width="22" height="13" fill="#f7cf5a"/><path d="M4 9 H19 V18 H15.5 V13.5 H7.5 V18 H4Z" fill="#3b8ed8"/></svg>
<svg class="a" style="left:0;top:0" width="500" height="41" viewBox="0 728 500 41">
<defs>
<linearGradient id="zmg" x1="0" y1="0" x2="0" y2="1"><stop offset="0" stop-color="#3a7cf6"/><stop offset="1" stop-color="#1d4fd8"/></linearGradient>
</defs>
<!-- coccoc 1 -->
<circle cx="171.8" cy="749" r="11.8" fill="#72c04a"/>
<path d="M171.8 749 L176 737 L184.5 737 L184 745Z" fill="#1f1b1b"/>
<path d="M173 746 L176.5 737.5 L179 737.5Z" fill="#e9e0b8"/><path d="M174.5 747 L180 738 L183.5 737.5Z" fill="#3aa36c"/><path d="M175 748 L183.8 741 L184 744Z" fill="#e4573b"/><path d="M175 749 L184 745 L183.6 748Z" fill="#f2d35a"/>
<circle cx="171.5" cy="749" r="4.3" fill="#72c04a" stroke="#eaf5e0" stroke-width="1.8"/>
<!-- tiktok -->
<circle cx="220.8" cy="749" r="12" fill="#070707"/>
<g fill="none" stroke-width="2.2" stroke-linecap="round">
<path d="M221.5 741 V753 Q221.5 756.5 218 756.5 Q214.5 756.5 214.5 753 Q214.5 749.5 218 749.5 M221.5 741 Q222.5 745 226.5 745.5" stroke="#25f4ee" transform="translate(-0.8,0.6)"/>
<path d="M221.5 741 V753 Q221.5 756.5 218 756.5 Q214.5 756.5 214.5 753 Q214.5 749.5 218 749.5 M221.5 741 Q222.5 745 226.5 745.5" stroke="#fe2c55" transform="translate(0.8,-0.4)"/>
<path d="M221.5 741 V753 Q221.5 756.5 218 756.5 Q214.5 756.5 214.5 753 Q214.5 749.5 218 749.5 M221.5 741 Q222.5 745 226.5 745.5" stroke="#fff" stroke-width="2"/>
</g>
<!-- coccoc 2 -->
<circle cx="270.8" cy="749.5" r="12" fill="#72c04a"/>
<path d="M270.8 749.5 L275 737 L284 737 L283.5 745Z" fill="#1f1b1b"/>
<path d="M272 746 L275.5 737.5 L278 737.5Z" fill="#e9e0b8"/><path d="M273.5 747 L279 738 L282.5 737.5Z" fill="#3aa36c"/><path d="M274 748 L283 741 L283.2 744Z" fill="#e4573b"/>
<circle cx="270.5" cy="749.5" r="4.3" fill="#72c04a" stroke="#eaf5e0" stroke-width="1.8"/>
<path d="M273 748 Q276 744 280 746 Q285 749 284 756 Q282 763 276 762 Q271 760 272 753Z" fill="#b98e76"/>
<path d="M275 750 L277 757 M278 749 L280 757" stroke="#5a3a2a" stroke-width="1.2"/>
<!-- chrome -->
<circle cx="320" cy="750" r="12.6" fill="#34a853"/>
<path d="M320 750 L309 743.7 A12.6 12.6 0 0 1 331 743.7Z" fill="#ea4335"/>
<path d="M320 750 L331 743.7 A12.6 12.6 0 0 1 320 762.6Z" fill="#fbbc04"/>
<circle cx="320" cy="750" r="5.6" fill="#fff"/><circle cx="320" cy="750" r="4.2" fill="#4285f4"/>
<circle cx="326" cy="756" r="7" fill="#d6eef8" stroke="#1f1b1b" stroke-width="0.8"/>
<path d="M321 762 Q322 756 326 755 Q330 756 331 762Z" fill="#5aa7d8"/><circle cx="326" cy="753" r="2.3" fill="#6a5040"/>
<!-- edge -->
<defs><linearGradient id="edg" x1="0" y1="1" x2="1" y2="0"><stop offset="0" stop-color="#1a5fb4"/><stop offset="0.5" stop-color="#2aa3e4"/><stop offset="1" stop-color="#5bd37a"/></linearGradient></defs>
<circle cx="368.2" cy="748.5" r="12.4" fill="url(#edg)"/>
<path d="M356 750 Q357 738 368 737 Q379 737 380.5 746 Q380 751 374.5 751 Q371 751 370 748.5 Q368 744.5 363 745 Q358 746 356 750Z" fill="#4cc98a" opacity="0.85"/>
<ellipse cx="366.8" cy="749.8" rx="3.6" ry="3" fill="#14263a"/>
<path d="M356.5 752 Q360 760 369 760.8 Q375 761 379 757 Q371 758 365 755 Q360 752 360 748Z" fill="#1858a8"/>
<!-- zoom -->
<rect x="393" y="728" width="48" height="41" fill="#3b3939"/>
<rect x="405" y="736.5" width="24.5" height="24.5" rx="10" fill="url(#zmg)"/>
<!-- zalo -->
<rect x="453.5" y="737" width="25" height="24" rx="8" fill="#f3f6fb"/>
<path d="M455 755 Q454 760 452 762 Q457 761 459 759Z" fill="#f3f6fb"/>
<circle cx="472.4" cy="755" r="8" fill="#e3141e"/>
</svg>
<div class="t" style="left:405px;top:15px;width:24.5px;text-align:center;font-size:11px;font-weight:bold;color:#fff;letter-spacing:-0.2px">zm</div>
<div class="t" style="left:456px;top:13px;font-size:8.5px;color:#2b6de0;font-weight:bold">Zalo</div>
<svg class="a" style="left:464px;top:19px" width="17" height="16" viewBox="0 0 17 16"><circle cx="8.4" cy="8" r="8" fill="#e3141e"/></svg>
<div class="t" style="left:464px;top:22px;width:17px;text-align:center;font-size:9.5px;color:#fff">5+</div>
<div class="a" style="left:250px;top:39px;width:40px;height:2px;background:#f2a5b5"></div>
<div class="a" style="left:299px;top:39px;width:40px;height:2px;background:#f2a5b5"></div>
<div class="a" style="left:348px;top:39px;width:40px;height:2px;background:#f2a5b5"></div>
<div class="a" style="left:393px;top:39px;width:48px;height:2px;background:#f2a5b5"></div>
<div class="a" style="left:446px;top:39px;width:40px;height:2px;background:#f2a5b5"></div>
<!-- tray -->
<svg class="a" style="left:1074px;top:16px" width="14" height="9" viewBox="0 0 14 9"><path d="M1 7.5 L7 1.5 L13 7.5" stroke="#fff" stroke-width="1.3" fill="none"/></svg>
<div class="a" style="left:1097px;top:13px;width:16px;height:16px;background:#f5c3c3"></div>
<div class="t" style="left:1097px;top:15px;width:16px;text-align:center;font-size:13px;color:#b0182a;font-weight:bold">V</div>
<svg class="a" style="left:1122px;top:12px" width="13" height="18" viewBox="0 0 13 18"><rect x="3.5" y="0.5" width="6" height="11" rx="3" fill="#fff"/><path d="M1.5 8 Q1.5 13.5 6.5 13.5 Q11.5 13.5 11.5 8 M6.5 13.5 V16.5 M3.5 16.5 H9.5" stroke="#fff" stroke-width="1.2" fill="none"/></svg>
<svg class="a" style="left:1144px;top:12px" width="18" height="17" viewBox="0 0 18 17" fill="none" stroke="#fff" stroke-width="1.2"><rect x="5" y="2.5" width="12" height="9"/><path d="M11 11.5 V14.5 M7.5 15.5 H14.5"/><rect x="0.6" y="0.6" width="5" height="5" fill="#1f1b1b"/><path d="M3 5.6 V12"/></svg>
<svg class="a" style="left:1168px;top:12px" width="17" height="17" viewBox="0 0 17 17" fill="none" stroke="#fff" stroke-width="1.2"><path d="M1 6 H4 L8 2.5 V14.5 L4 11 H1Z"/><path d="M10.5 6 Q11.8 8.5 10.5 11 M12.8 4 Q15 8.5 12.8 13"/><path d="M15 2 Q18 8.5 15 15" stroke="#777"/></svg>
<svg class="a" style="left:1192px;top:12px" width="18" height="17" viewBox="0 0 18 17" fill="none" stroke="#fff" stroke-width="1.2"><rect x="5" y="5" width="11.5" height="8"/><rect x="7" y="7" width="8" height="4" fill="#fff"/><path d="M16.5 7.5 H17.5 V10.5 H16.5"/><path d="M1 5 V7.5 M4 5 V7.5 M0.5 7.5 H4.5 V9 Q4.5 10.5 2.5 10.5 Q0.5 10.5 0.5 9Z M2.5 10.5 V12"/></svg>
<div class="t" style="left:1219px;top:16px;font-size:11.5px;color:#fff;letter-spacing:-0.4px">ENG</div>
<div class="t" style="left:1258px;top:6px;font-size:12px;color:#fff">8:54 AM</div>
<div class="t" style="left:1252px;top:24px;font-size:11.5px;color:#fff">12/20/2025</div>
<svg class="a" style="left:1324px;top:12px" width="27" height="25" viewBox="0 0 27 25"><path d="M1 1 H19 V13 H8 L4 17 V13 H1Z" fill="#fff"/><path d="M4 5 H16 M4 8 H16 M4 11 H12" stroke="#1f1b1b" stroke-width="1"/><circle cx="17" cy="15" r="8" fill="#1f1b1b" stroke="#777" stroke-width="1"/></svg>
<div class="t" style="left:1335px;top:22px;width:14px;text-align:center;font-size:11px;color:#fff;font-weight:bold">5</div>
<div class="a" style="left:1362px;top:0;width:1px;height:41px;background:#555"></div>
</div>
</body></html>
